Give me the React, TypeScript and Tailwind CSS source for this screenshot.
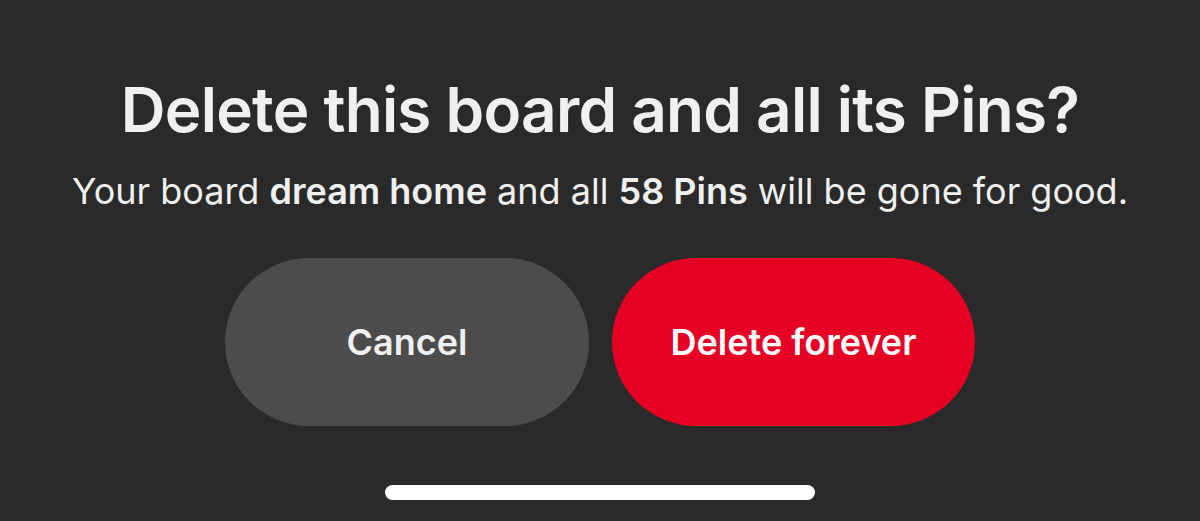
export default function App() {
  return (
    <div
      className="h-[521px] w-full bg-[#2a2a2a] flex flex-col items-center text-[#f0f0f0]"
      style={{ fontFamily: 'Inter, "Noto Sans", sans-serif' }}
    >
      {/* Heading */}
      <h1 className="mt-[72px] text-[62px] leading-[76px] font-semibold tracking-[-0.75px]">
        Delete this board and all its Pins?
      </h1>
      <p className="mt-[21px] text-[36px] leading-[44px]">
        Your board <span className="font-semibold">dream home</span> and all{' '}
        <span className="font-semibold">58 Pins</span> will be gone for good.
      </p>

      {/* Actions */}
      <div className="mt-[45px] flex gap-[23px]">
        <button className="w-[364px] h-[168px] rounded-full bg-[#4c4c4c] text-[36px] font-semibold text-[#f0f0f0]">
          Cancel
        </button>
        <button className="w-[363px] h-[168px] rounded-full bg-[#e60023] text-[36px] font-semibold text-white">
          Delete forever
        </button>
      </div>

      {/* Home indicator */}
      <div className="mt-[59px] w-[430px] h-[15px] rounded-full bg-white" />
    </div>
  );
}
